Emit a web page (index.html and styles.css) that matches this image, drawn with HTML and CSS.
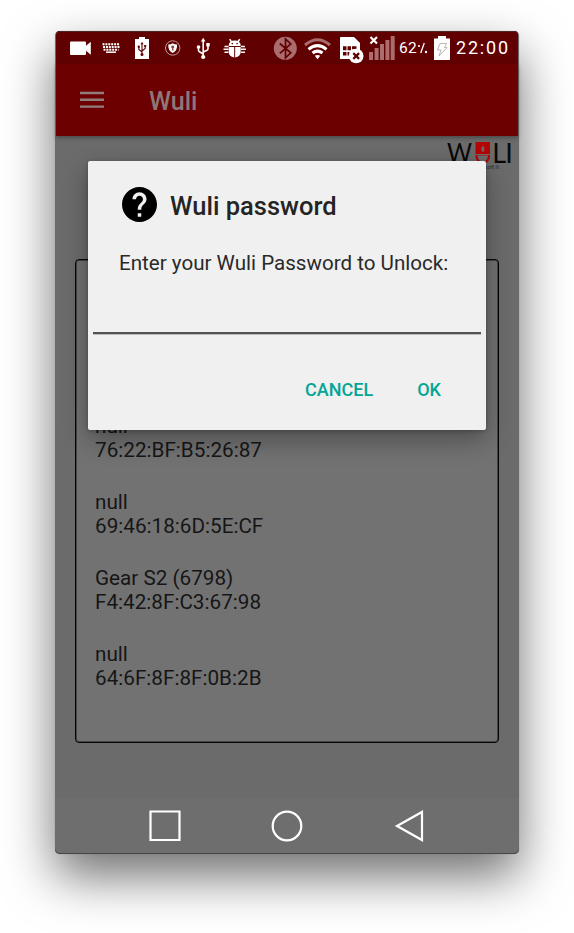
FILE: index.html
```html
<!DOCTYPE html>
<html lang="en">
<head>
<meta charset="utf-8">
<title>Wuli</title>
<link rel="stylesheet" href="styles.css">
</head>
<body>
<div class="phone">
  <div class="status">
    <svg class="cell" viewBox="65 31 31 33"><path fill="#fff" d="M71 41.500h14q1 0 1 1v3.200l4.800-4v13l-4.800-4v3.300q0 1-1 1H71q-1 0-1-1V42.500q0-1 1-1z"/></svg>
    <svg class="cell" viewBox="96 31 31 33"><g stroke="#fff" stroke-width="1.900" fill="none"><path stroke-dasharray="2 .9" d="M102.500 44.200H120M103 47H119.500M103.500 49.700H118.500"/><path d="M106 52.200h10" stroke-width="1.500"/></g></svg>
    <svg class="cell" viewBox="127 31 31 33"><path fill="#fff" d="M135 39h4v-2h6v2h4v20h-14z"/><g stroke="#610000" fill="none" stroke-width="1.100"><path d="M142 43.500V54M138.800 47v2.500l3.200 2.500M145.200 46v2.500l-3.200 2.500"/></g><g fill="#610000"><path d="M140.500 44.200l1.500-2.400 1.500 2.400z"/><circle cx="142" cy="54.500" r="1.500"/><circle cx="138.800" cy="46.800" r="1.200"/><path d="M144.200 45h2v2h-2z"/></g></svg>
    <svg class="cell" viewBox="158 31 31 33"><circle cx="172.700" cy="48" r="7.200" fill="none" stroke="#c29a9a" stroke-width="1"/><path fill="#fff" d="M168.300 44.500q2.500 0 4.400-1.300 1.900 1.300 4.400 1.300 .5 6-4.400 8.500-4.900-2.500-4.400-8.500z"/><path fill="#8a4a4a" d="M172.700 45.500a1.500 1.500 0 0 1 .6 2.900l.3 2.100h-1.800l.3-2.100a1.500 1.500 0 0 1 .6-2.900z"/></svg>
    <svg class="cell" viewBox="189 31 31 33"><g stroke="#fff" fill="none" stroke-width="1.600"><path d="M203.200 40v17M198.500 47v3.300q0 1 1 1.500l3.700 2.200M208 45v3.800q0 1-1 1.500l-3.800 1.700"/></g><g fill="#fff"><path d="M200.900 41.500l2.300-3.700 2.300 3.700z"/><circle cx="203.200" cy="57" r="2.100"/><circle cx="198.500" cy="47" r="1.800"/><path d="M206.300 43h3.400v3.400h-3.400z"/></g></svg>
    <svg class="cell" viewBox="220 31 31 33"><g fill="#fff"><path d="M228.700 46q0-5.500 6-5.500t6 5.500zM228.700 47h5.500v10.500q-5.500-1-5.500-6zM235.200 47h5.500v4.500q0 5-5.500 6z"/></g><g stroke="#fff" stroke-width="1.500" fill="none"><path d="M231.500 42l-1.800-2.800M237.900 42l1.800-2.800M224.500 46.500h4M223.500 49.300h5M224.500 52.200h4M244.900 46.500h-4M245.900 49.300h-5M244.900 52.200h-4"/></g><g fill="#610000"><circle cx="232.300" cy="43.600" r=".8"/><circle cx="237.100" cy="43.600" r=".8"/></g></svg>
    <span class="gap"></span>
    <svg class="cell wide" viewBox="270 31 32 33"><circle cx="285.300" cy="48.300" r="11.500" fill="#aa6c6c"/><path d="M279.800 43.500l11 9.300-5.300 5V39l5.300 5-11 9.300" fill="none" stroke="#610000" stroke-width="1.700"/></svg>
    <svg class="cell wide" viewBox="302 31 32 33"><g fill="none" stroke-width="3"><path stroke="#aa6c6c" d="M305 45q12.500-10.500 25 0"/><path stroke="#fff" d="M308.500 49.300q9-7.300 18 0M312.500 53q5-3.800 10 0"/></g><path fill="#fff" d="M314.800 55.800q2.700-1.600 5.400 0l-2.700 3.500z"/></svg>
    <svg class="cell wide" viewBox="334 31 32 33"><path fill="#fff" d="M341 37h13l6 6v16h-20V38q0-1 1-1z"/><path fill="#610000" d="M343 46.200h3.500v4H343zM347.500 46.200h3.500v4h-3.500zM352 46.200h4.500v3H352zM343 52h3.500v3.500H343zM347.500 52h2v3.500h-2z"/><circle cx="356.200" cy="56" r="7.300" fill="#fff"/><path stroke="#610000" stroke-width="2.200" d="M353.300 53.100l5.800 5.800m0-5.800l-5.800 5.800"/></svg>
    <svg class="cell wide" viewBox="366 31 32 33"><path fill="#aa6c6c" d="M369 52h4v8h-4zM374.600 48h4v12h-4zM380 44h4v16h-4zM385.400 40h4v20h-4zM390.700 36h4v24h-4z"/><path stroke="#fff" stroke-width="2.200" d="M370.500 37l6.500 6.500m0-6.500l-6.500 6.500"/></svg>
    <span class="percent">62<svg class="pct" viewBox="0 0 11 12" role="img" aria-label="percent"><path d="M7.300 1L3.700 11" stroke="#fff" stroke-width="1.300"/><circle cx="2" cy="4" r="1.100" fill="#fff"/><circle cx="9" cy="10" r="1.200" fill="#fff"/></svg></span>
    <svg class="batt" viewBox="431 31 22 33"><path fill="#fff" d="M434 38.500h4V36h8v2.500h4V60h-16z"/><path d="M440 43.500h6.500l-2 4h2.500l-8 8.500 2-6h-3.500z" fill="none" stroke="#bdb6b6"/></svg>
    <span class="time">22:00</span>
  </div>
  <div class="appbar">
    <svg class="menu" viewBox="0 0 24 18"><path d="M0 2h24M0 8.800h24M0 15.600h24" stroke="#917c7c" stroke-width="2.400"/></svg>
    <span class="app-name">Wuli</span>
  </div>
  <div class="content">
    <svg class="logo" viewBox="0 0 66 32">
      <text class="letter" x="0" y="23.500" textLength="25" lengthAdjust="spacingAndGlyphs">W</text>
      <path fill="#b50404" d="M28.500 3H43v12H28.500zM28.500 16H43v2q-1 6.500-7.250 6.500T28.500 18z"/>
      <path fill="#6b6b6b" d="M34.600 7.500h2.600v5h-2.600zM30.500 16.500h10.500q-.5 6-5.250 6t-5.250-6z"/>
      <text class="letter" x="45.200" y="23.500">L</text>
      <text class="letter" x="58.300" y="23.500">I</text>
      <text class="tagline" x="38" y="29.500">soft it</text>
    </svg>
    <div class="list">
      <div class="item">null<br>76:22:BF:B5:26:87</div>
      <div class="item">null<br>69:46:18:6D:5E:CF</div>
      <div class="item">Gear S2 (6798)<br>F4:42:8F:C3:67:98</div>
      <div class="item">null<br>64:6F:8F:8F:0B:2B</div>
    </div>
  </div>
  <div class="nav">
    <svg viewBox="0 0 34 34"><path d="M2.500 2.500h29v28.500h-29z"/></svg>
    <svg viewBox="0 0 34 34"><circle cx="17" cy="17" r="14.300"/></svg>
    <svg viewBox="0 0 34 34"><path d="M30 3v28L5 17z"/></svg>
  </div>
  <div class="dialog">
    <div class="heading">
      <svg class="help" viewBox="2 2 20 20"><path d="M12 2C6.480 2 2 6.480 2 12s4.480 10 10 10 10-4.480 10-10S17.520 2 12 2zm1 17h-2v-2h2v2zm2.070-7.750l-.9.920C13.450 12.900 13 13.500 13 15h-2v-.5c0-1.100.45-2.100 1.170-2.830l1.240-1.260c.37-.36.59-.86.59-1.410 0-1.100-.9-2-2-2s-2 .9-2 2H8c0-2.210 1.790-4 4-4s4 1.790 4 4c0 .88-.36 1.680-.93 2.250z"/></svg>
      <span class="title">Wuli password</span>
    </div>
    <div class="message">Enter your Wuli Password to Unlock:</div>
    <div class="field"></div>
    <div class="actions"><span>CANCEL</span><span>OK</span></div>
  </div>
</div>
</body>
</html>
```
FILE: styles.css
```css
body {
  margin: 0;
  height: 933px;
  overflow: hidden;
  background: #fff;
  font-family: Roboto, sans-serif;
}
svg { display: block; flex: none; }
.phone {
  position: relative;
  display: flex;
  flex-direction: column;
  box-sizing: border-box;
  width: 464px;
  height: 823px;
  margin: 31px 0 0 55px;
  border-radius: 5px;
  background: #6b6b6b;
  box-shadow: 0 22px 50px rgba(0, 0, 0, .57), 0 0 1px rgba(0, 0, 0, .4);
}
.status {
  display: flex;
  align-items: center;
  height: 33px;
  margin: 0 1px;
  padding-left: 9px;
  border-radius: 4px 4px 0 0;
  background: #610000;
  box-shadow: inset 0 1px 0 #4c2525;
  color: #fff;
}
.cell { width: 31px; height: 33px; }
.cell.wide { width: 32px; }
.gap { width: 19px; flex: none; }
.percent {
  display: flex;
  align-items: center;
  width: 33px;
  padding-left: 1px;
  box-sizing: border-box;
  font-size: 15.500px;
  letter-spacing: .3px;
  line-height: 34px;
}
.pct { width: 11px; height: 12px; }
.batt { width: 22px; height: 33px; }
.time { padding-left: 3px; font-size: 18px; line-height: 34px; letter-spacing: 1.800px; white-space: nowrap; }
.appbar {
  display: flex;
  align-items: center;
  height: 72px;
  margin: 0 1px;
  padding-left: 24px;
  gap: 45px;
  background: #6c0000;
  box-shadow: 0 2px 4px rgba(0, 0, 0, .3);
}
.menu { width: 24px; height: 18px; }
.app-name { padding-top: 3px; color: #8b7878; font-size: 25px; font-weight: 500; line-height: 69px; }
.content { height: 662px; display: flex; flex-direction: column; align-items: center; }
.logo { width: 66px; height: 32px; margin: 3px 6px 0 0; align-self: flex-end; overflow: visible; }
.logo text { font-family: Lato, sans-serif; fill: #080808; }
.logo .letter { font-size: 27px; }
.logo .tagline { font-size: 5.500px; fill: #303030; }
.list {
  box-sizing: border-box;
  width: 424px;
  height: 484px;
  margin: 88px 0 0;
  padding: 154px 0 0 19px;
  border: 1px solid #060606;
  border-radius: 4px;
  background: #727272;
  box-shadow: inset 0 0 0 1px rgba(0, 0, 0, .4);
}
.item { height: 76px; color: #161616; font-size: 20.700px; line-height: 24px; }
.nav {
  display: flex;
  justify-content: center;
  align-items: center;
  gap: 88px;
  height: 56px;
  background: #6e6e6e;
  border-radius: 0 0 5px 5px;
  box-shadow: inset 0 -1px 0 #474747;
}
.nav svg { width: 34px; height: 34px; fill: none; stroke: #fff; stroke-width: 2.200; }
.dialog {
  position: absolute;
  left: 33px;
  top: 130px;
  width: 398px;
  height: 269px;
  border-radius: 2px;
  background: #f0f0f0;
  box-shadow: 0 10px 26px rgba(0, 0, 0, .32), 0 1px 4px rgba(0, 0, 0, .25);
}
.heading { display: flex; align-items: center; height: 35px; margin: 26px 0 0 34px; gap: 13px; }
.help { width: 35px; height: 35px; }
.title { padding-top: 3px; color: #242424; font-size: 25.500px; font-weight: 500; line-height: 33px; }
.message { margin: 29px 0 0 31px; color: #2a2a2a; font-size: 20.600px; line-height: 24px; white-space: nowrap; }
.field { height: 57px; margin: 0 5px; border-bottom: 2px solid #555253; box-shadow: 0 1px 0 #bcbaba; }
.actions { display: flex; justify-content: flex-end; gap: 44px; margin: 44px 45px 0 0; color: #03a594; font-size: 18px; font-weight: 500; line-height: 24px; }
```
